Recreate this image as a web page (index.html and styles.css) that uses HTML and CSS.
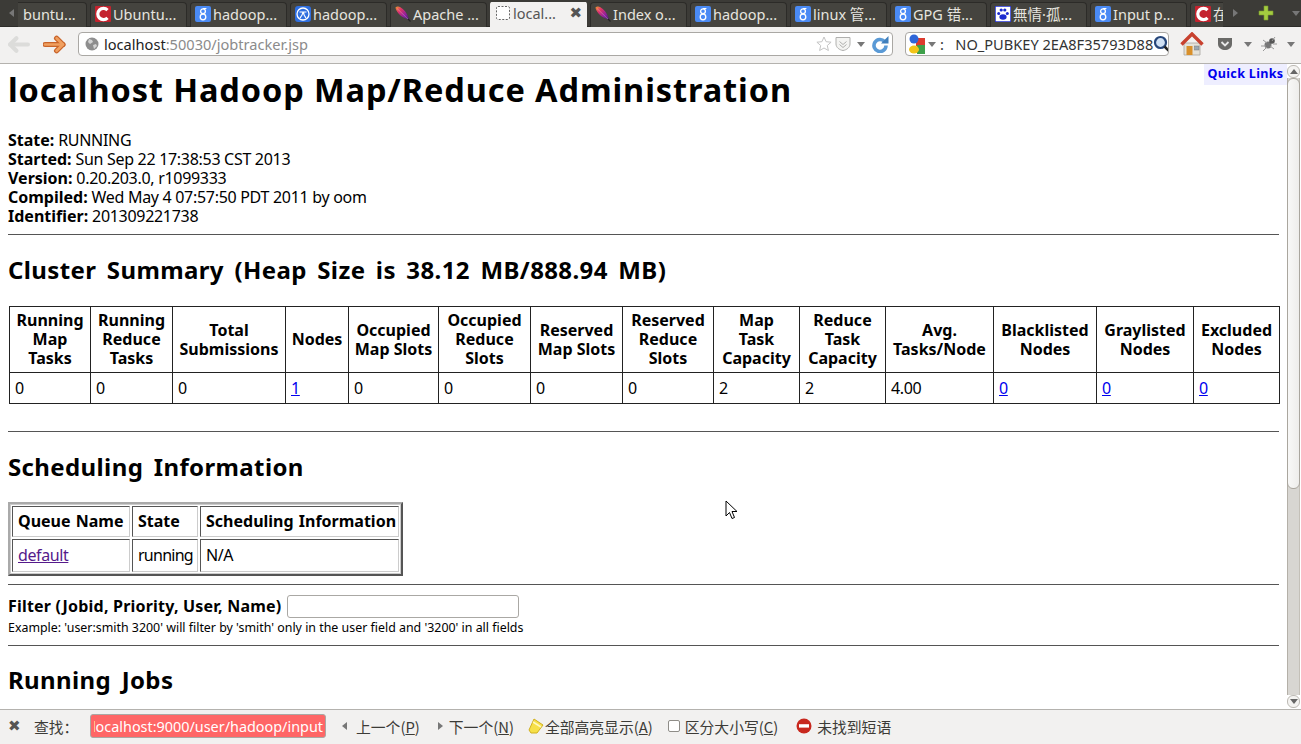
FILE: index.html
```html
<!DOCTYPE html>
<html lang="en">
<head>
<meta charset="utf-8">
<title>localhost Hadoop Map/Reduce Administration</title>
<link rel="stylesheet" href="styles.css">
</head>
<body>
<svg class="defs" width="0" height="0" aria-hidden="true">
  <defs>
    <linearGradient id="feather" x1="0" y1="0" x2="1" y2="1">
      <stop offset="0" stop-color="#f09a2c"/><stop offset=".3" stop-color="#e0336a"/><stop offset=".65" stop-color="#8c1fa0"/><stop offset="1" stop-color="#3a1a60"/>
    </linearGradient>
  </defs>
  <symbol id="i-c" viewBox="0 0 16 16"><rect width="16" height="16" rx="1" fill="#c4232e"/><path d="M12.500 4.200A5.600 5.600 0 1 0 12.500 11.800" fill="none" stroke="#fff" stroke-width="3.200"/></symbol>
  <symbol id="i-g" viewBox="0 0 16 16"><rect width="16" height="16" rx="2" fill="#4a8af4"/><circle cx="8" cy="5.300" r="2.400" fill="none" stroke="#fff" stroke-width="1.300"/><circle cx="8" cy="11" r="2.800" fill="none" stroke="#fff" stroke-width="1.300"/><path d="M8 2.500h3.400" stroke="#fff" stroke-width="1.200"/></symbol>
  <symbol id="i-w" viewBox="0 0 16 16"><rect width="16" height="16" rx="3" fill="#2f6fe0"/><circle cx="8" cy="8" r="6" fill="none" stroke="#fff" stroke-width="1.300"/><path d="M4.500 6h7M8 6c-.5 3-1.500 4.500-3 6M8.500 6c0 3 1 4.500 2.500 6" fill="none" stroke="#fff" stroke-width="1.200"/></symbol>
  <symbol id="i-f" viewBox="0 0 16 16"><path d="M.5 1.500C1.500.5 3.500 0 5 1c4 2 7 6 9 12l.5 1.500-1.500-1C9 12 3.500 9 1.500 4.500 1 3.500.5 2.500.5 1.500z" fill="url(#feather)"/><path d="M2 2.500L14 14" stroke="#fff" stroke-opacity=".45" stroke-width=".6"/><path d="M13 13l2.500 2.500" stroke="#222" stroke-width="1.200"/></symbol>
  <symbol id="i-d" viewBox="0 0 16 16"><rect x="1.500" y="1.500" width="13" height="13" rx="1.500" fill="#fff" stroke="#666" stroke-dasharray="2 1.500"/></symbol>
  <symbol id="i-p" viewBox="0 0 16 16"><rect width="16" height="16" fill="#fff" stroke="#1c2bd0" stroke-width="1.500"/><ellipse cx="8" cy="11" rx="3.600" ry="2.800" fill="#1c2bd0"/><circle cx="3.700" cy="7.500" r="1.500" fill="#1c2bd0"/><circle cx="12.300" cy="7.500" r="1.500" fill="#1c2bd0"/><circle cx="6.200" cy="4" r="1.600" fill="#1c2bd0"/><circle cx="9.800" cy="4" r="1.600" fill="#1c2bd0"/></symbol>
</svg>

<div class="app">
  <div class="tabstrip">
    <span class="tri tri-left strip-arrow"></span>
    <div class="tabs">
      <div class="tab tab-first"><span class="tab-text">buntu...</span></div>
      <div class="tab"><svg class="fav"><use href="#i-c"/></svg><span class="tab-text">Ubuntu...</span></div>
      <div class="tab"><svg class="fav"><use href="#i-g"/></svg><span class="tab-text">hadoop...</span></div>
      <div class="tab"><svg class="fav"><use href="#i-w"/></svg><span class="tab-text">hadoop...</span></div>
      <div class="tab"><svg class="fav"><use href="#i-f"/></svg><span class="tab-text">Apache ...</span></div>
      <div class="tab tab-active"><svg class="fav"><use href="#i-d"/></svg><span class="tab-text">local...</span><span class="tab-close">✖</span></div>
      <div class="tab"><svg class="fav"><use href="#i-f"/></svg><span class="tab-text">Index o...</span></div>
      <div class="tab"><svg class="fav"><use href="#i-g"/></svg><span class="tab-text">hadoop...</span></div>
      <div class="tab"><svg class="fav"><use href="#i-g"/></svg><span class="tab-text">linux 管...</span></div>
      <div class="tab"><svg class="fav"><use href="#i-g"/></svg><span class="tab-text">GPG 错...</span></div>
      <div class="tab"><svg class="fav"><use href="#i-p"/></svg><span class="tab-text">無情·孤...</span></div>
      <div class="tab"><svg class="fav"><use href="#i-g"/></svg><span class="tab-text">Input p...</span></div>
      <div class="tab tab-last"><svg class="fav"><use href="#i-c"/></svg><span class="tab-text">在</span></div>
    </div>
    <span class="tri tri-right strip-arrow-r"></span>
    <svg class="plus" viewBox="0 0 16 16"><path d="M6 1h4v5h5v4h-5v5H6v-5H1V6h5z" fill="#a4cc40" stroke="#7a9c2c" stroke-width=".6"/></svg>
    <span class="tri tri-down strip-drop"></span>
  </div>

  <div class="toolbar">
    <svg class="nav-arrow" viewBox="0 0 22 18"><g fill="none" stroke="#dcdcda" stroke-width="4" stroke-linecap="round" stroke-linejoin="round"><path d="M20 9H3"/><path d="M9 3L3 9l6 6"/></g></svg>
    <svg class="nav-arrow nav-fwd" viewBox="0 0 22 18"><g fill="none" stroke="#c9642a" stroke-width="5" stroke-linecap="round" stroke-linejoin="round"><path d="M2 9h17"/><path d="M13 3l6 6-6 6"/></g><g fill="none" stroke="#f0a060" stroke-width="2.600" stroke-linecap="round" stroke-linejoin="round"><path d="M2 9h17"/><path d="M13 3l6 6-6 6"/></g></svg>
    <div class="urlbar">
      <svg class="globe" viewBox="0 0 14 14"><circle cx="7" cy="7" r="6.500" fill="#8e8e8e"/><path d="M4 2l3 1 1 2-3 2-2-2zM8 8l3-1 1 2-3 3z" fill="#d4d4d4"/></svg>
      <span class="url"><span class="url-host">localhost</span>:50030/jobtracker.jsp</span>
      <svg class="url-star" viewBox="0 0 16 16"><path d="M8 1l2.100 4.700 5 .5-3.800 3.300 1.100 5L8 12l-4.400 2.500 1.100-5L.9 6.200l5-.5z" fill="#fff" stroke="#c4c4c4"/></svg>
      <svg class="url-shield" viewBox="0 0 16 16"><path d="M1 1.500h14V8c0 3.500-3.500 6-7 6.500C4.500 14 1 11.500 1 8z" fill="#f4f4f2" stroke="#b0b0ae"/><path d="M4.500 5.500L8 8.500l3.500-3M4.500 8.500L8 11.500l3.500-3" fill="none" stroke="#b0b0ae"/></svg>
      <span class="tri tri-down url-drop"></span>
      <svg class="url-reload" viewBox="0 0 18 18"><path d="M13.500 6.500A6 6 0 1 0 15 10.500" fill="none" stroke="#5a9ad6" stroke-width="3.600"/><path d="M10 8.500h7.500V1z" fill="#3f7fbc"/></svg>
    </div>
    <div class="searchbar">
      <svg class="search-logo" viewBox="0 0 16 20"><rect x="7" y="4" width="9" height="8" fill="#dc3b2e"/><rect x="8" y="11" width="8" height="9" fill="#3ea04a"/><ellipse cx="5" cy="15.500" rx="5" ry="4" fill="#f2c418"/><circle cx="5" cy="5" r="4.500" fill="#2f66d8"/></svg>
      <span class="tri tri-down search-drop"></span>
      <span class="search-text">:&nbsp;&nbsp;&nbsp;NO_PUBKEY 2EA8F35793D88</span>
      <svg class="search-glass" viewBox="0 0 18 18"><circle cx="7.500" cy="7.500" r="5.500" fill="#cfe0f4" stroke="#26467a" stroke-width="2.200"/><path d="M11.500 11.500l5 5" stroke="#222" stroke-width="2.600"/></svg>
    </div>
    <svg class="home" viewBox="0 0 24 24"><path d="M4 11h16v12H4z" fill="#e4e2da" stroke="#a8a69e" stroke-width=".8"/><path d="M1.500 12.500L12 2l10.500 10.500" fill="none" stroke="#c8412f" stroke-width="3.400"/><rect x="6.500" y="14" width="6" height="9" fill="#d9902a"/><rect x="14.500" y="14" width="4.500" height="4" fill="#9aa8b4" stroke="#777"  stroke-width=".5"/></svg>
    <svg class="pocket" viewBox="0 0 16 16"><path d="M1 2h14v6c0 4-4 6-7 6S1 12 1 8z" fill="#6a6a68"/><path d="M4.500 6L8 9.500 11.500 6" fill="none" stroke="#e8e8e8" stroke-width="1.800"/></svg>
    <span class="tri tri-down tool-drop"></span>
    <svg class="bug" viewBox="0 0 18 16"><ellipse cx="8" cy="9" rx="3.500" ry="3.500" fill="#777"/><circle cx="12" cy="5" r="2.800" fill="#555"/><path d="M3 4l4 3M15 1l-3 4M1 10h5M17 8h-4M3 15l4-4M14 13l-4-3" stroke="#999"/></svg>
    <span class="tri tri-down tool-drop-2"></span>
  </div>

  <div class="viewport">
    <div class="page">
      <h1>localhost Hadoop Map/Reduce Administration</h1>
      <div class="meta">
        <b>State:</b> RUNNING<br>
        <b>Started:</b> Sun Sep 22 17:38:53 CST 2013<br>
        <b>Version:</b> 0.20.203.0, r1099333<br>
        <b>Compiled:</b> Wed May 4 07:57:50 PDT 2011 by oom<br>
        <b>Identifier:</b> 201309221738
      </div>
      <hr>
      <h2>Cluster Summary (Heap Size is 38.12 MB/888.94 MB)</h2>
      <table class="summary">
        <colgroup>
          <col class="c1"><col class="c2"><col class="c3"><col class="c4"><col class="c5"><col class="c6"><col class="c7"><col class="c8"><col class="c9"><col class="c10"><col class="c11"><col class="c12"><col class="c13"><col class="c14">
        </colgroup>
        <tr>
          <th>Running<br>Map<br>Tasks</th><th>Running<br>Reduce<br>Tasks</th><th>Total<br>Submissions</th><th>Nodes</th><th>Occupied<br>Map Slots</th><th>Occupied<br>Reduce<br>Slots</th><th>Reserved<br>Map Slots</th><th>Reserved<br>Reduce<br>Slots</th><th>Map<br>Task<br>Capacity</th><th>Reduce<br>Task<br>Capacity</th><th>Avg.<br>Tasks/Node</th><th>Blacklisted<br>Nodes</th><th>Graylisted<br>Nodes</th><th>Excluded<br>Nodes</th>
        </tr>
        <tr>
          <td>0</td><td>0</td><td>0</td><td><a href="#">1</a></td><td>0</td><td>0</td><td>0</td><td>0</td><td>2</td><td>2</td><td>4.00</td><td><a href="#">0</a></td><td><a href="#">0</a></td><td><a href="#">0</a></td>
        </tr>
      </table>
      <hr class="hr-after-summary">
      <h2 class="h2-sched">Scheduling Information</h2>
      <table class="sched">
        <colgroup><col class="q1"><col class="q2"><col class="q3"></colgroup>
        <tr><th>Queue Name</th><th>State</th><th>Scheduling Information</th></tr>
        <tr><td><a class="visited" href="#">default</a></td><td class="cell-state">running</td><td>N/A</td></tr>
      </table>
      <hr class="hr-after-sched">
      <div class="filter"><b>Filter (Jobid, Priority, User, Name)</b> <span class="filter-input"></span></div>
      <div class="example">Example: 'user:smith 3200' will filter by 'smith' only in the user field and '3200' in all fields</div>
      <hr>
      <h2 class="h2-jobs">Running Jobs</h2>
    </div>
    <a class="quick" href="#">Quick Links</a>
    <div class="scrollbar">
      <span class="sb-btn"><span class="tri tri-up sb-tri"></span></span>
      <div class="sb-track"><div class="sb-thumb"></div></div>
      <span class="sb-btn"><span class="tri tri-down sb-tri"></span></span>
    </div>
    <svg class="cursor" viewBox="0 0 13 20"><path d="M1 1v15l3.500-3.500 2.500 6 2.500-1-2.500-6h5z" fill="#fff" stroke="#000"/></svg>
  </div>

  <div class="findbar">
    <span class="find-close">✖</span>
    <span class="find-label">查找：</span>
    <div class="find-input"><div class="find-clip"><span>localhost:9000/user/hadoop/input</span></div></div>
    <span class="tri tri-left find-prev"></span>
    <span class="find-btn find-btn-prev">上一个(<u>P</u>)</span>
    <span class="tri tri-right find-next"></span>
    <span class="find-btn">下一个(<u>N</u>)</span>
    <svg class="highlighter" viewBox="0 0 16 16"><path d="M6 1l9 6-6 8H3L1 12z" fill="#f6e048" stroke="#d0b020"/><path d="M5 4l8 5" stroke="#fff8c0" stroke-width="1.500"/></svg>
    <span class="find-btn find-btn-all">全部高亮显示(<u>A</u>)</span>
    <span class="find-check"></span>
    <span class="find-btn find-btn-case">区分大小写(<u>C</u>)</span>
    <svg class="stop" viewBox="0 0 16 16"><circle cx="8" cy="8" r="7.500" fill="#c8281e"/><rect x="3" y="6.200" width="10" height="3.400" fill="#fff"/></svg>
    <span class="find-btn">未找到短语</span>
  </div>
</div>
</body>
</html>
```

FILE: styles.css
```css
* { box-sizing: border-box; }
html, body { margin: 0; height: 100%; overflow: hidden; }
body { font-family: "Noto Sans", "Noto Sans CJK SC", sans-serif; color: #000; background: #fff; }
.defs { position: absolute; }
.app { display: flex; flex-direction: column; width: 1301px; height: 744px; overflow: hidden; }

.tri { display: inline-block; width: 0; height: 0; flex: none; border-style: solid; border-color: transparent; }
.tri-left { border-width: 4px 5px 4px 0; border-right-color: #777; }
.tri-right { border-width: 4px 0 4px 5px; border-left-color: #777; }
.tri-down { border-width: 5px 4px 0 4px; border-top-color: #777; }
.tri-up { border-width: 0 4px 5px 4px; border-bottom-color: #777; }

/* tab strip */
.tabstrip { height: 27px; flex: none; display: flex; align-items: center; background: #3c3b37; border-bottom: 1px solid #2e2d2a; }
.strip-arrow { margin-left: 9px; margin-right: 4px; }
.tabs { display: flex; align-self: flex-end; width: 1205px; margin-bottom: -1px; overflow: hidden; gap: 3px; }
.tab { flex: none; width: 97px; height: 25px; display: flex; align-items: center; gap: 2px; padding: 0 4px 3px; background: #45443f; border: 1px solid #2c2b28; border-bottom: 0; border-radius: 4px 4px 0 0; color: #e6e4df; font-size: 14.5px; line-height: 20px; white-space: nowrap; overflow: hidden; }
.tab-first { width: 69px; border-left: 0; border-radius: 0 4px 0 0; padding-left: 5px; }
.tab-active { background: #f2f1f0; color: #555; border-color: #f2f1f0; height: 26px; margin-top: -1px; }
.tab-close { margin-left: auto; color: #555; font-family: "DejaVu Sans", sans-serif; font-size: 15px; }
.tab-last { width: 34px; border-right: 0; border-radius: 4px 0 0 0; }
.fav { flex: none; width: 16px; height: 16px; }
.strip-arrow-r { margin-left: 10px; }
.plus { width: 16px; height: 16px; margin-left: 20px; }
.strip-drop { margin-left: 18px; }

/* nav toolbar */
.toolbar { height: 37px; flex: none; display: flex; align-items: center; background: #f2f1f0; border-bottom: 1px solid #b4b2ae; padding: 0 0 2px 7px; }
.nav-arrow { width: 23px; height: 19px; flex: none; }
.nav-fwd { margin-left: 13px; }
.urlbar { width: 815px; height: 24px; margin-left: 12px; display: flex; align-items: center; background: #fff; border: 1px solid #aaa8a4; border-radius: 4px; padding: 0 3px 0 6px; }
.globe { width: 14px; height: 14px; flex: none; }
.url { margin-left: 5px; color: #8b8b8b; font-size: 14.6px; white-space: nowrap; }
.url-host { color: #222; }
.url-star { width: 16px; height: 16px; margin-left: auto; }
.url-shield { width: 16px; height: 16px; margin-left: 3px; }
.url-drop { margin-left: 6px; }
.url-reload { width: 18px; height: 18px; margin-left: 6px; }
.searchbar { width: 264px; height: 24px; margin-left: 12px; display: flex; align-items: center; background: #fff; border: 1px solid #aaa8a4; border-radius: 4px; padding: 0 1px 0 3px; overflow: hidden; }
.search-logo { width: 16px; height: 20px; flex: none; }
.search-drop { margin-left: 3px; }
.search-text { margin-left: 4px; font-size: 14.6px; color: #333; white-space: pre; }
.search-glass { width: 18px; height: 18px; margin-left: auto; flex: none; }
.home { width: 24px; height: 24px; margin-left: 11px; flex: none; }
.pocket { width: 16px; height: 16px; margin-left: 13px; flex: none; }
.tool-drop { margin-left: 11px; }
.bug { width: 18px; height: 16px; margin-left: 8px; flex: none; }
.tool-drop-2 { margin-left: 9px; }

/* page */
.viewport { flex: 1; min-height: 0; display: flex; position: relative; }
.page { flex: 1; min-width: 0; overflow: hidden; padding: 0 8px; font-size: 16px; line-height: 19px; color: #000; }
h1 { margin: 0; padding-top: 5px; font-size: 32.5px; line-height: 42px; font-weight: 700; letter-spacing: .9px; white-space: nowrap; }
h2 { margin: 0; font-size: 24px; line-height: 32px; font-weight: 700; letter-spacing: .38px; word-spacing: 3.9px; white-space: nowrap; }
hr { margin: 0; border: 0; height: 1px; background: #555; }
.meta { margin-top: 20px; margin-bottom: 8px; letter-spacing: -.3px; }
.meta b { letter-spacing: 0; }
.page > h2 { padding-top: 19px; padding-bottom: 20px; height: 71px; }
.page > .h2-sched { height: 70px; }
.page > .h2-jobs { padding-top: 18px; }
a { color: #0000ee; }
a.visited { color: #551a8b; }
table { font-size: 16px; line-height: 19px; }
.summary { width: 1270px; margin-left: 1px; border-collapse: collapse; table-layout: fixed; }
.c1 { width: 81px; } .c2 { width: 82px; } .c3 { width: 113px; } .c4 { width: 63px; } .c5 { width: 90px; } .c6 { width: 92px; } .c7 { width: 92px; }
.c8 { width: 91px; } .c9 { width: 86px; } .c10 { width: 86px; } .c11 { width: 108px; } .c12 { width: 103px; } .c13 { width: 97px; } .c14 { width: 86px; }
.summary th, .summary td { border: 1px solid #222; padding: 4px 2px; }
.summary th { text-align: center; }
.summary td { padding: 6px 5px 5px; text-align: left; letter-spacing: -.35px; }
.hr-after-summary { margin-top: 27px; }
.sched { border: 2px solid; border-color: #aaa #555 #555 #aaa; outline: 1px solid #ccc; outline-offset: -3px; border-spacing: 2px; border-collapse: separate; width: 395px; table-layout: fixed; }
.q1 { width: 118px; } .q2 { width: 66px; } .q3 { width: 199px; }
.sched th, .sched td { border: 1px solid; border-color: #555 #ccc #ccc #555; padding: 5px; text-align: left; white-space: nowrap; }
.sched th { word-spacing: 1px; }
.sched td { padding: 6px 5px; letter-spacing: -.4px; }
.sched .cell-state { letter-spacing: -.75px; }
.hr-after-sched { margin-top: 8px; }
.filter { margin-top: 10px; display: flex; align-items: center; gap: 6px; letter-spacing: .2px; }
.filter-input { display: block; width: 232px; height: 23px; background: #fff; border: 1px solid #aaa8a4; border-radius: 3px; }
.example { font-size: 12.4px; line-height: 15px; margin-top: 2px; margin-bottom: 10px; }

.quick { position: absolute; right: 14px; top: 0; width: 83px; height: 21px; text-align: center; background: #eeeeff; color: #0000ee; font-size: 12.6px; font-weight: 700; line-height: 20px; letter-spacing: .3px; text-decoration: none; }
.scrollbar { width: 14px; padding: 1px 1px 1px 0; flex: none; display: flex; flex-direction: column; background: #fff; }
.sb-btn { height: 13px; flex: none; display: flex; align-items: center; justify-content: center; border: 1px solid #bdbab4; background: #f4f3f1; border-radius: 6px; }
.sb-tri { border-top-color: #666; border-bottom-color: #666; }
.sb-track { flex: 1; background: #d8d6d2; border-left: 1px solid #b4b0a8; border-right: 1px solid #c4c0b8; }
.sb-thumb { height: 411px; background: linear-gradient(90deg, #f8f8f7, #eeedeb); border: 1px solid #aaa69e; border-radius: 6px; margin: 0 -1px; }
.cursor { position: absolute; left: 725px; top: 436px; width: 13px; height: 20px; }

/* find bar */
.findbar { height: 35px; flex: none; display: flex; align-items: center; background: #f2f1f0; border-top: 1px solid #b4b2ae; padding: 0 0 2px 8px; font-family: "Noto Sans CJK SC", "Noto Sans", sans-serif; font-size: 14.8px; color: #3c3b37; white-space: nowrap; }
.find-close { width: 14px; color: #555; font-family: "DejaVu Sans", sans-serif; font-size: 15px; line-height: 20px; }
.find-label { margin-left: 12px; width: 56px; }
.find-input { width: 236px; height: 24px; display: flex; align-items: center; padding: 0 2px 0 3px; background: #ff6666; border: 1px solid #aaa8a4; border-radius: 3px; color: #fff; font-family: "Noto Sans", sans-serif; font-size: 14.4px; }
.find-clip { flex: 1; min-width: 0; display: flex; justify-content: flex-end; overflow: hidden; }
.find-clip span { flex: none; }
.find-prev { margin-left: 16px; }
.find-btn-prev { margin-left: 9px; }
.find-btn { display: inline-block; }
.find-next { margin-left: 18px; }
.find-next + .find-btn { margin-left: 6px; }
.highlighter { width: 16px; height: 16px; margin-left: 14px; flex: none; }
.find-btn-all { margin-left: 1px; }
.find-check { width: 12px; height: 12px; margin-left: 15px; background: #fff; border: 1px solid #8f8d88; border-radius: 2px; flex: none; }
.find-btn-case { margin-left: 5px; }
.stop { width: 16px; height: 16px; margin-left: 18px; margin-right: 5px; flex: none; }
```
